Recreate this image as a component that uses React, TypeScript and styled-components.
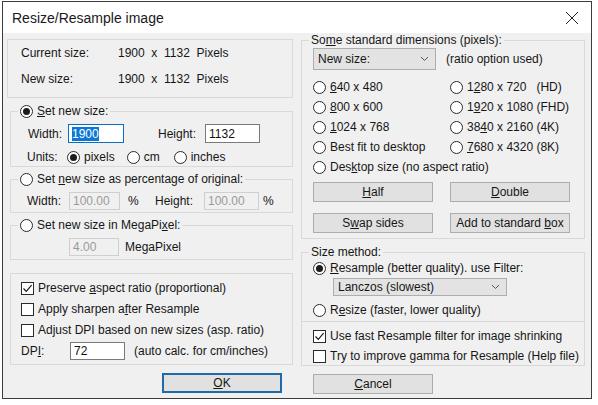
import styled, { createGlobalStyle } from "styled-components";

const Global = createGlobalStyle`
  html, body {
    margin: 0;
    background: #ffffff;
  }
  body {
    font-family: "Liberation Sans", Arial, sans-serif;
    font-size: 12px;
    color: #161616;
  }
`;

const Window = styled.div`
  margin: 1px 0 0 2px;
  width: 588px;
  height: 396px;
  border: 1px solid #3c3c3c;
  background: #f0f0f0;
  display: flex;
  flex-direction: column;
`;

const TitleBar = styled.div`
  height: 31px;
  background: #ffffff;
  display: flex;
  align-items: center;
  justify-content: space-between;
  padding: 0 12px 0 9px;
  font-size: 14px;
  color: #1a1a1a;
`;

const Body = styled.div`
  flex: 1;
  display: flex;
  gap: 8px;
  padding: 0 6px 0 4px;
`;

const Column = styled.div<{ $width: number }>`
  width: ${(p) => p.$width}px;
  display: flex;
  flex-direction: column;
`;

const InfoBox = styled.div`
  margin-top: 6px;
  border: 1px solid #d9d9d9;
  padding: 5px 0 10px 13px;
  display: grid;
  grid-template-columns: 97px auto;
  row-gap: 10px;
  line-height: 16px;
`;

const Group = styled.fieldset<{ $top: number; $inset: number; $pt?: number; $pb: number }>`
  margin: ${(p) => p.$top}px 0 0 ${(p) => p.$inset}px;
  padding: ${(p) => p.$pt ?? 6}px 0 ${(p) => p.$pb}px 0;
  border: 1px solid #d9d9d9;
  min-width: 0;
`;

const GroupBody = styled.div<{ $pl: number }>`
  padding-left: ${(p) => p.$pl}px;
`;

const Legend = styled.legend`
  margin-left: 7px;
  padding: 0 2px;
  height: 14px;
  line-height: 14px;
  display: flex;
  align-items: center;
`;

const PlainBox = styled.div`
  margin: 13px 0 0 3px;
  border: 1px solid #d9d9d9;
  padding: 6px 0 4px 10px;
  display: flex;
  flex-direction: column;
  gap: 5px;
`;

const Row = styled.div<{ $h?: number; $mt?: number }>`
  display: flex;
  align-items: center;
  height: ${(p) => p.$h ?? 16}px;
  margin-top: ${(p) => p.$mt ?? 0}px;
  line-height: 16px;
  white-space: nowrap;
`;

const Label = styled.span<{ $w?: number; $ml?: number }>`
  display: inline-block;
  width: ${(p) => (p.$w ? `${p.$w}px` : "auto")};
  margin-left: ${(p) => p.$ml ?? 0}px;
`;

const TextBox = styled.div<{ $w: number; $h?: number; $state?: "focus" | "disabled" }>`
  box-sizing: border-box;
  width: ${(p) => p.$w}px;
  height: ${(p) => p.$h ?? 18}px;
  padding: 0 3px;
  display: flex;
  align-items: center;
  border: 1px solid
    ${(p) => (p.$state === "focus" ? "#0a6fc2" : p.$state === "disabled" ? "#cfcfcf" : "#7a7a7a")};
  background: ${(p) => (p.$state === "disabled" ? "#f0f0f0" : "#ffffff")};
  color: ${(p) => (p.$state === "disabled" ? "#9a9a9a" : "#111")};
`;

const Selected = styled.span`
  background: #0a78d4;
  color: #ffffff;
  line-height: 14px;
`;

const Option = styled.span<{ $mr?: number }>`
  display: inline-flex;
  align-items: center;
  gap: 4px;
  margin-right: ${(p) => p.$mr ?? 0}px;
  white-space: nowrap;
`;

const RadioDot = styled.span<{ $on?: boolean }>`
  box-sizing: border-box;
  width: 13px;
  height: 13px;
  border-radius: 50%;
  border: 1px solid #2a2a2a;
  background: #ffffff;
  display: inline-flex;
  align-items: center;
  justify-content: center;
  flex: none;
  &::after {
    content: "";
    width: 7px;
    height: 7px;
    border-radius: 50%;
    background: ${(p) => (p.$on ? "#1c1c1c" : "transparent")};
  }
`;

const CheckBoxSquare = styled.span`
  box-sizing: border-box;
  width: 13px;
  height: 13px;
  border: 1px solid #2a2a2a;
  background: #ffffff;
  display: inline-flex;
  align-items: center;
  justify-content: center;
  flex: none;
`;

const U = styled.u`
  text-decoration: underline;
  text-underline-offset: 1px;
`;

const Button = styled.button<{ $primary?: boolean }>`
  box-sizing: border-box;
  width: 120px;
  height: 20px;
  padding: 0;
  font-family: inherit;
  font-size: 12px;
  color: #161616;
  background: #e1e1e1;
  border: 1px solid ${(p) => (p.$primary ? "#1f6aa8" : "#adadad")};
  box-shadow: ${(p) => (p.$primary ? "inset 0 0 0 1px #1f6aa8" : "none")};
`;

const Combo = styled.div<{ $w: number; $h: number }>`
  box-sizing: border-box;
  width: ${(p) => p.$w}px;
  height: ${(p) => p.$h}px;
  background: #e3e3e3;
  border: 1px solid #adadad;
  display: flex;
  align-items: center;
  justify-content: space-between;
  padding: 0 6px 0 4px;
`;

const DimGrid = styled.div<{ $mt: number; $gap: number }>`
  display: grid;
  grid-template-columns: 137px auto;
  row-gap: ${(p) => p.$gap}px;
  margin-top: ${(p) => p.$mt}px;
  line-height: 16px;
`;

const Separator = styled.div`
  height: 1px;
  background: #d9d9d9;
  margin: 3px 0 0 -11px;
`;

const BottomButton = styled.div<{ $align: "start" | "end" }>`
  margin-top: 8px;
  display: flex;
  justify-content: ${(p) => (p.$align === "end" ? "flex-end" : "flex-start")};
  padding: ${(p) => (p.$align === "end" ? "0 11px 0 0" : "0 0 0 12px")};
`;

function Chevron() {
  return (
    <svg width="9" height="6" viewBox="0 0 9 6">
      <polyline points="1,1 4.5,4.5 8,1" fill="none" stroke="#555" strokeWidth="1" />
    </svg>
  );
}

function Tick() {
  return (
    <svg width="11" height="11" viewBox="0 0 11 11">
      <polyline points="1.5,5.5 4.3,8.4 9.6,2.2" fill="none" stroke="#1c1c1c" strokeWidth="1.2" />
    </svg>
  );
}

function Radio({ on, children, mr }: { on?: boolean; children: React.ReactNode; mr?: number }) {
  return (
    <Option $mr={mr}>
      <RadioDot $on={on} />
      <span>{children}</span>
    </Option>
  );
}

function Check({ on, children }: { on?: boolean; children: React.ReactNode }) {
  return (
    <Option>
      <CheckBoxSquare>{on && <Tick />}</CheckBoxSquare>
      <span>{children}</span>
    </Option>
  );
}

export default function App() {
  return (
    <>
      <Global />
      <Window>
        <TitleBar>
          <span>Resize/Resample image</span>
          <svg width="14" height="14" viewBox="0 0 14 14">
            <path d="M1 1L13 13M13 1L1 13" stroke="#222" strokeWidth="1" />
          </svg>
        </TitleBar>
        <Body>
          <Column $width={286}>
            <InfoBox>
              <span>Current size:</span>
              <span>1900&nbsp; x &nbsp;1132&nbsp; Pixels</span>
              <span>New size:</span>
              <span>1900&nbsp; x &nbsp;1132&nbsp; Pixels</span>
            </InfoBox>

            <Group $top={6} $inset={3} $pb={1}>
              <Legend>
                <Radio on>
                  <U>S</U>et new size:
                </Radio>
              </Legend>
              <GroupBody $pl={17}>
                <Row $h={19}>
                  <Label $w={40}>Width:</Label>
                  <TextBox $w={56} $h={19} $state="focus">
                    <Selected>1900</Selected>
                  </TextBox>
                  <Label $w={47} $ml={34}>Height:</Label>
                  <TextBox $w={55} $h={19}>1132</TextBox>
                </Row>
                <Row $mt={6}>
                  <Label $w={40} $ml={-1}>Units:</Label>
                  <Radio on mr={12}>pixels</Radio>
                  <Radio mr={14}>cm</Radio>
                  <Radio>inches</Radio>
                </Row>
              </GroupBody>
            </Group>

            <Group $top={5} $inset={3} $pb={2}>
              <Legend>
                <Radio>
                  Set <U>n</U>ew size as percentage of original:
                </Radio>
              </Legend>
              <GroupBody $pl={16}>
                <Row $h={18}>
                  <Label $w={42}>Width:</Label>
                  <TextBox $w={51} $state="disabled">100.00</TextBox>
                  <Label $w={27} $ml={8}>%</Label>
                  <Label $w={49}>Height:</Label>
                  <TextBox $w={55} $state="disabled">100.00</TextBox>
                  <Label $ml={4}>%</Label>
                </Row>
              </GroupBody>
            </Group>

            <Group $top={5} $inset={3} $pb={3}>
              <Legend>
                <Radio>
                  Set new size in MegaPi<U>x</U>el:
                </Radio>
              </Legend>
              <GroupBody $pl={58}>
                <Row $h={18}>
                  <TextBox $w={50} $state="disabled">4.00</TextBox>
                  <Label $ml={6}>MegaPixel</Label>
                </Row>
              </GroupBody>
            </Group>

            <PlainBox>
              <Row>
                <Check on>
                  Preserve <U>a</U>spect ratio (proportional)
                </Check>
              </Row>
              <Row>
                <Check>
                  Apply sharpen a<U>f</U>ter Resample
                </Check>
              </Row>
              <Row>
                <Check>Adjust DPI based on new sizes (asp. ratio)</Check>
              </Row>
              <Row $h={18} $mt={-1}>
                <Label $w={49}>
                  DP<U>I</U>:
                </Label>
                <TextBox $w={55}>72</TextBox>
                <Label $ml={9}>(auto calc. for cm/inches)</Label>
              </Row>
            </PlainBox>

            <BottomButton $align="end">
              <Button $primary>
                <U>O</U>K
              </Button>
            </BottomButton>
          </Column>

          <Column $width={284}>
            <Group $top={0} $inset={0} $pt={1} $pb={5}>
              <Legend>
                <span>
                  So<U>m</U>e standard dimensions (pixels):
                </span>
              </Legend>
              <GroupBody $pl={11}>
                <Row $h={22}>
                  <Combo $w={123} $h={22}>
                    <span>New size:</span>
                    <Chevron />
                  </Combo>
                  <Label $ml={10}>(ratio option used)</Label>
                </Row>
                <DimGrid $mt={9} $gap={4}>
                  <Radio>
                    <U>6</U>40 x 480
                  </Radio>
                  <Radio>
                    1<U>2</U>80 x 720&nbsp;&nbsp; (HD)
                  </Radio>
                  <Radio>
                    <U>8</U>00 x 600
                  </Radio>
                  <Radio>
                    1<U>9</U>20 x 1080 (FHD)
                  </Radio>
                  <Radio>
                    <U>1</U>024 x 768
                  </Radio>
                  <Radio>
                    38<U>4</U>0 x 2160 (4K)
                  </Radio>
                  <Radio>Best fit to desktop</Radio>
                  <Radio>
                    <U>7</U>680 x 4320 (8K)
                  </Radio>
                  <Radio>
                    Des<U>k</U>top size (no aspect ratio)
                  </Radio>
                </DimGrid>
                <DimGrid $mt={7} $gap={11}>
                  <Button>
                    <U>H</U>alf
                  </Button>
                  <Button>
                    <U>D</U>ouble
                  </Button>
                  <Button>
                    S<U>w</U>ap sides
                  </Button>
                  <Button>
                    Add to standard <U>b</U>ox
                  </Button>
                </DimGrid>
              </GroupBody>
            </Group>

            <Group $top={6} $inset={0} $pt={1} $pb={1}>
              <Legend>
                <span>Size method:</span>
              </Legend>
              <GroupBody $pl={11}>
                <Row>
                  <Radio on>
                    <U>R</U>esample (better quality). use Filter:
                  </Radio>
                </Row>
                <Row $h={18} $mt={2}>
                  <Label $ml={20}>
                    <Combo $w={174} $h={18}>
                      <span>Lanczos (slowest)</span>
                      <Chevron />
                    </Combo>
                  </Label>
                </Row>
                <Row $mt={6}>
                  <Radio>
                    R<U>e</U>size (faster, lower quality)
                  </Radio>
                </Row>
                <Separator />
                <Row $mt={6}>
                  <Check on>Use fast Resample filter for image shrinking</Check>
                </Row>
                <Row $mt={4}>
                  <Check>Try to improve gamma for Resample (Help file)</Check>
                </Row>
              </GroupBody>
            </Group>

            <BottomButton $align="start">
              <Button>
                <U>C</U>ancel
              </Button>
            </BottomButton>
          </Column>
        </Body>
      </Window>
    </>
  );
}
